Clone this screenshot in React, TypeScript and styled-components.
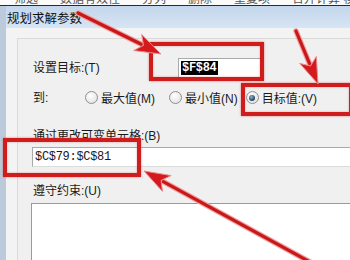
import styled, { createGlobalStyle } from "styled-components";

const Global = createGlobalStyle`
  html, body { margin: 0; padding: 0; }
  body { font-family: "Liberation Sans", "Noto Sans CJK SC", sans-serif; font-size: 12px; color: #1a1a1a; }
`;

const Screen = styled.div`
  position: relative;
  width: 350px;
  height: 260px;
  overflow: hidden;
  background: #f0f0f0;
  display: flex;
  flex-direction: column;
`;

const Ribbon = styled.div`
  height: 5px;
  background: #fbfbfb;
  border-bottom: 1px solid #2a2a2a;
  overflow: hidden;
  display: flex;
  gap: 22px;
  padding-left: 14px;
  font-size: 12px;
  color: #555;
  line-height: 12px;
  white-space: nowrap;
`;

const RibbonText = styled.span`
  margin-top: -7px;
`;

const Frame = styled.div`
  flex: 1;
  display: flex;
  flex-direction: column;
  background: linear-gradient(#d3e1f0, #e4ecf5 40px);
  border-left: 6px solid #bccbdc;
`;

const TitleBar = styled.div`
  height: 22px;
  display: flex;
  align-items: center;
  padding-left: 1px;
  font-size: 12.5px;
  color: #111;
  background: linear-gradient(#c3d6eb, #d7e5f4);
`;

const Client = styled.div`
  flex: 1;
  background: #f3f3f3;
  padding: 10px 0 0 11px;
  display: flex;
`;

const Panel = styled.div`
  flex: 1;
  background: #f0f0f0;
  border-left: 1px solid #dadada;
  border-top: 1px solid #dadada;
  padding: 18px 0 0 15px;
  display: flex;
  flex-direction: column;
`;

const Row = styled.div<{ $mt?: number; $h?: number }>`
  display: flex;
  align-items: center;
  margin-top: ${(p) => p.$mt ?? 0}px;
  height: ${(p) => p.$h ?? 21}px;
`;

const Label = styled.span<{ $w?: number }>`
  width: ${(p) => (p.$w ? `${p.$w}px` : "auto")};
  line-height: 14px;
`;

const Field = styled.div<{ $w?: number }>`
  height: 20px;
  box-sizing: border-box;
  width: ${(p) => (p.$w ? `${p.$w}px` : "auto")};
  flex: ${(p) => (p.$w ? "none" : 1)};
  margin-right: ${(p) => (p.$w ? 0 : -4)}px;
  margin-left: ${(p) => (p.$w ? 0 : -1)}px;
  background: #fff;
  border: 1px solid #a9a9a9;
  border-right-color: #dcdcdc;
  border-bottom-color: #dcdcdc;
  display: flex;
  align-items: center;
  padding-left: 2px;
  font-family: "Liberation Mono", "DejaVu Sans Mono", monospace;
  font-size: 12px;
  letter-spacing: -0.3px;
`;

const Selected = styled.span`
  background: #000;
  color: #fff;
  padding: 0 1px;
  line-height: 14px;
  font-weight: bold;
`;

const RadioItem = styled.label<{ $ml: number }>`
  display: flex;
  align-items: center;
  gap: 3px;
  margin-left: ${(p) => p.$ml}px;
`;

const Circle = styled.span<{ $on?: boolean }>`
  width: 11px;
  height: 11px;
  border-radius: 50%;
  border: 1px solid #8f8f8f;
  background: radial-gradient(circle at 40% 35%, #ffffff, #dcdcdc);
  display: flex;
  align-items: center;
  justify-content: center;
  &::after {
    content: "";
    display: ${(p) => (p.$on ? "block" : "none")};
    width: 6px;
    height: 6px;
    border-radius: 50%;
    background: radial-gradient(circle at 40% 35%, #8fb3cf, #1e3f5a 70%);
  }
`;

const ListBox = styled.div`
  flex: 1;
  margin: 4px -4px 0 -2px;
  background: #fff;
  border: 1px solid #9a9a9a;
  border-bottom: none;
`;

const Mark = styled.div<{ $x: number; $y: number; $w: number; $h: number }>`
  position: absolute;
  left: ${(p) => p.$x}px;
  top: ${(p) => p.$y}px;
  width: ${(p) => p.$w}px;
  height: ${(p) => p.$h}px;
  box-sizing: border-box;
  border: 4px solid #cf1c1c;
  box-shadow: 0 0 2px rgba(210, 40, 40, 0.6), inset 0 0 2px rgba(210, 40, 40, 0.5);
`;

const Overlay = styled.svg`
  position: absolute;
  left: 0;
  top: 0;
  pointer-events: none;
`;

type Pt = [number, number];

const arrowHead = (from: Pt, tip: Pt, len: number, half: number) => {
  const dx = tip[0] - from[0];
  const dy = tip[1] - from[1];
  const d = Math.hypot(dx, dy);
  const ux = dx / d;
  const uy = dy / d;
  const bx = tip[0] - ux * len;
  const by = tip[1] - uy * len;
  const pts = [
    [tip[0], tip[1]],
    [bx - uy * half, by + ux * half],
    [bx + ux * len * 0.25, by + uy * len * 0.25],
    [bx + uy * half, by - ux * half],
  ];
  return {
    points: pts.map((p) => p.join(",")).join(" "),
    end: [bx + ux * 4, by + uy * 4] as Pt,
  };
};

const Arrow = ({ from, tip }: { from: Pt; tip: Pt }) => {
  const h = arrowHead(from, tip, 26, 9);
  return (
    <g>
      <line x1={from[0]} y1={from[1]} x2={h.end[0]} y2={h.end[1]} stroke="#f2a0a0" strokeWidth={5.5} strokeLinecap="round" />
      <line x1={from[0]} y1={from[1]} x2={h.end[0]} y2={h.end[1]} stroke="#c8181a" strokeWidth={3.2} strokeLinecap="round" />
      <polygon points={h.points} fill="#d41a1c" stroke="#ee8a8a" strokeWidth={1} />
    </g>
  );
};

export default function App() {
  return (
    <>
      <Global />
      <Screen>
        <Ribbon>
          <RibbonText>筛选</RibbonText>
          <RibbonText>数据有效性</RibbonText>
          <RibbonText>分列</RibbonText>
          <RibbonText>删除</RibbonText>
          <RibbonText>重复项</RibbonText>
          <RibbonText>合并计算 模拟分析</RibbonText>
        </Ribbon>
        <Frame>
          <TitleBar>规划求解参数</TitleBar>
          <Client>
            <Panel>
              <Row>
                <Label $w={145}>设置目标:(T)</Label>
                <Field $w={84}>
                  <Selected>$F$84</Selected>
                </Field>
              </Row>
              <Row $mt={9}>
                <Label $w={52}>到:</Label>
                <RadioItem $ml={0}>
                  <Circle />
                  最大值(M)
                </RadioItem>
                <RadioItem $ml={14}>
                  <Circle />
                  最小值(N)
                </RadioItem>
                <RadioItem $ml={8}>
                  <Circle $on />
                  目标值:(V)
                </RadioItem>
              </Row>
              <Row $mt={17}>
                <Label>通过更改可变单元格:(B)</Label>
              </Row>
              <Row $h={22}>
                <Field>$C$79:$C$81</Field>
              </Row>
              <Row $mt={15} $h={16}>
                <Label>遵守约束:(U)</Label>
              </Row>
              <ListBox />
            </Panel>
          </Client>
        </Frame>

        <Mark $x={149} $y={42} $w={115} $h={39} />
        <Mark $x={241} $y={83} $w={112} $h={33} />
        <Mark $x={3} $y={138} $w={138} $h={39} />

        <Overlay width={350} height={260}>
          <Arrow from={[78, 13]} tip={[161, 54]} />
          <Arrow from={[296, 31]} tip={[318, 84]} />
          <Arrow from={[310, 262]} tip={[144, 171]} />
        </Overlay>
      </Screen>
    </>
  );
}
